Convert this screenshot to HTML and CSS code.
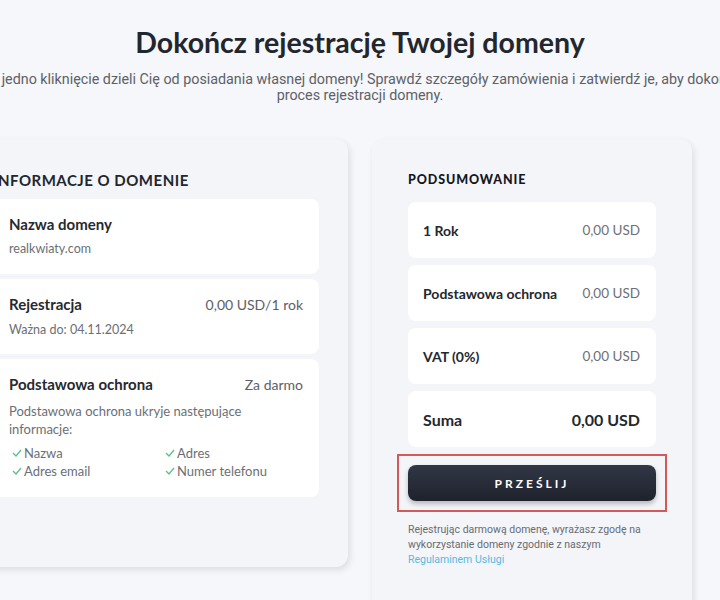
FILE: index.html
```html
<!DOCTYPE html>
<html lang="pl">
<head>
<meta charset="utf-8">
<title>Dokończ rejestrację Twojej domeny</title>
<link rel="stylesheet" href="styles.css">
</head>
<body>
<header class="intro">
  <h1 class="title">Dokończ rejestrację Twojej domeny</h1>
  <p class="lead">Tylko jedno kliknięcie dzieli Cię od posiadania własnej domeny! Sprawdź szczegóły zamówienia i zatwierdź je, aby dokończyć proces rejestracji domeny.</p>
</header>
<main class="layout">
  <section class="card card-info">
    <h2 class="card-title">Informacje o domenie</h2>
    <div class="box">
      <div class="box-row"><span class="box-label">Nazwa domeny</span></div>
      <div class="box-sub">realkwiaty.com</div>
    </div>
    <div class="box">
      <div class="box-row"><span class="box-label">Rejestracja</span><span class="box-value">0,00 USD/1 rok</span></div>
      <div class="box-sub">Ważna do: 04.11.2024</div>
    </div>
    <div class="box">
      <div class="box-row"><span class="box-label">Podstawowa ochrona</span><span class="box-value">Za darmo</span></div>
      <div class="box-desc">Podstawowa ochrona ukryje następujące informacje:</div>
      <ul class="checks">
        <li><svg class="check" viewBox="0 0 10 8" width="10" height="8"><path d="M1 4 L4 7 L9 1" fill="none" stroke="#5bbf8a" stroke-width="1.3"/></svg>Nazwa</li>
        <li><svg class="check" viewBox="0 0 10 8" width="10" height="8"><path d="M1 4 L4 7 L9 1" fill="none" stroke="#5bbf8a" stroke-width="1.3"/></svg>Adres</li>
        <li><svg class="check" viewBox="0 0 10 8" width="10" height="8"><path d="M1 4 L4 7 L9 1" fill="none" stroke="#5bbf8a" stroke-width="1.3"/></svg>Adres email</li>
        <li><svg class="check" viewBox="0 0 10 8" width="10" height="8"><path d="M1 4 L4 7 L9 1" fill="none" stroke="#5bbf8a" stroke-width="1.3"/></svg>Numer telefonu</li>
      </ul>
    </div>
  </section>
  <section class="card card-summary">
    <h2 class="sum-title">Podsumowanie</h2>
    <div class="sum-row"><span class="sum-label">1 Rok</span><span class="sum-value">0,00 USD</span></div>
    <div class="sum-row"><span class="sum-label">Podstawowa ochrona</span><span class="sum-value">0,00 USD</span></div>
    <div class="sum-row"><span class="sum-label">VAT (0%)</span><span class="sum-value">0,00 USD</span></div>
    <div class="sum-row sum-total"><span class="sum-label">Suma</span><span class="sum-value">0,00 USD</span></div>
    <div class="highlight">
      <button class="submit" type="button">Prześlij</button>
    </div>
    <p class="terms">Rejestrując darmową domenę, wyrażasz zgodę na wykorzystanie domeny zgodnie z naszym <a class="terms-link" href="#">Regulaminem Usługi</a></p>
  </section>
</main>
</body>
</html>
```
FILE: styles.css
```css
html, body {
  margin: 0;
  padding: 0;
  background: #f6f7fa;
  overflow: hidden;
}
body {
  font-family: "Lato", "Noto Sans", sans-serif;
  color: #23262d;
  width: 720px;
  height: 600px;
}
.intro {
  padding-top: 24px;
  display: flex;
  flex-direction: column;
  align-items: center;
}
.title {
  margin: 0;
  font-size: 28.5px;
  font-weight: 700;
  color: #23262d;
  line-height: 36px;
}
.lead {
  margin: 11px 0 0;
  width: 815px;
  flex: none;
  text-align: center;
  font-family: "Roboto", sans-serif;
  font-stretch: 90%;
  font-size: 14.3px;
  line-height: 16px;
  color: #5d6168;
}
.layout {
  display: flex;
  align-items: flex-start;
  gap: 24px;
  margin-top: 36px;
  margin-left: -35px;
}
.card {
  flex: none;
  background: #f3f5f9;
  border-radius: 12px;
  box-shadow: 2px 3px 6px rgba(30, 40, 60, 0.12);
  box-sizing: border-box;
}
.card-info {
  width: 383px;
  height: 428px;
  padding: 31px 29px 0 28px;
}
.card-title {
  margin: 0 0 9px;
  font-size: 15px;
  font-weight: 700;
  letter-spacing: 0.5px;
  text-transform: uppercase;
  line-height: 20px;
}
.box {
  background: #ffffff;
  border-radius: 8px;
  padding: 15px 16px 16.5px;
  margin-bottom: 5px;
}
.box-row {
  display: flex;
  justify-content: space-between;
  align-items: baseline;
  line-height: 20px;
}
.box-label {
  font-size: 15px;
  font-weight: 700;
  color: #26292f;
}
.box-value {
  font-size: 14px;
  color: #5c6066;
}
.box-sub {
  margin-top: 7px;
  font-size: 12.5px;
  line-height: 16px;
  color: #6b6f75;
}
.box-desc {
  margin-top: 7px;
  font-size: 13px;
  line-height: 18px;
  color: #6b6f75;
  max-width: 260px;
}
.checks {
  list-style: none;
  margin: 6px 0 0;
  padding: 0;
  display: grid;
  grid-template-columns: 1fr 1fr;
  column-gap: 12px;
  font-size: 13px;
  line-height: 18px;
  color: #6b6f75;
}
.checks li {
  display: flex;
  align-items: center;
  gap: 2px;
  padding-left: 3px;
}
.check {
  flex: none;
}
.card-summary {
  width: 320px;
  height: 520px;
  padding: 32px 36px 0;
}
.sum-title {
  margin: 0 0 13px;
  font-size: 12.5px;
  font-weight: 900;
  letter-spacing: 0.9px;
  text-transform: uppercase;
  line-height: 18px;
  color: #15171c;
}
.sum-row {
  display: flex;
  justify-content: space-between;
  align-items: center;
  height: 56px;
  padding: 0 16px 0 15px;
  background: #ffffff;
  border-radius: 8px;
  margin-bottom: 7px;
}
.sum-label {
  font-size: 14px;
  font-weight: 700;
  color: #24272d;
}
.sum-value {
  font-size: 13.5px;
  color: #6c7077;
}
.sum-total .sum-label,
.sum-total .sum-value {
  font-size: 16px;
  font-weight: 700;
  color: #24272d;
}
.highlight {
  margin: 4px -11px 0;
  padding: 9px;
  border: 2px solid #d35a5a;
}
.submit {
  display: block;
  width: 100%;
  height: 36px;
  border: 0;
  border-radius: 8px;
  background: linear-gradient(#323746, #1e222c);
  box-shadow: 0 3px 5px rgba(0, 0, 0, 0.25);
  color: #ffffff;
  font-family: "Lato", sans-serif;
  font-size: 12px;
  font-weight: 700;
  letter-spacing: 3px;
  text-transform: uppercase;
}
.terms {
  margin: 10px 0 0;
  font-family: "Roboto", sans-serif;
  font-size: 10.5px;
  line-height: 15px;
  color: #686c73;
}
.terms-link {
  color: #59b9e0;
  text-decoration: none;
}
```
